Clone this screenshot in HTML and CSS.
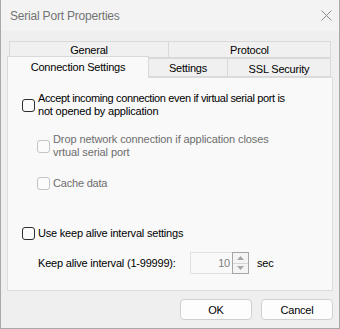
FILE: index.html
```html
<!DOCTYPE html>
<html>
<head>
<meta charset="utf-8">
<link rel="stylesheet" href="styles.css">
</head>
<body>
<div class="window">
  <div class="titlebar">
    <span class="title">Serial Port Properties</span>
    <svg class="close" width="11" height="11" viewBox="0 0 11 11"><path d="M0.5 0.5L10.5 10.5M10.5 0.5L0.5 10.5" stroke="#8c8c8c" stroke-width="1" fill="none"/></svg>
  </div>
  <div class="body">
    <div class="tabs">
      <div class="tabrow back">
        <div class="tab t-general">General</div>
        <div class="tab t-protocol">Protocol</div>
      </div>
      <div class="tabrow front">
        <div class="tab sel">Connection Settings</div>
        <div class="tab t-settings">Settings</div>
        <div class="tab t-ssl">SSL Security</div>
      </div>
    </div>
    <div class="panel">
      <div class="opt opt-accept">
        <span class="cb"></span>
        <span class="lbl"><span class="tight">Accept incoming connection even if virtual serial port is</span><br>not opened by application</span>
      </div>
      <div class="opt opt-drop disabled">
        <span class="cb"></span>
        <span class="lbl wide">Drop network connection if application closes<br>vrtual serial port</span>
      </div>
      <div class="opt opt-cache disabled">
        <span class="cb"></span>
        <span class="lbl">Cache data</span>
      </div>
      <div class="opt opt-keep">
        <span class="cb"></span>
        <span class="lbl">Use keep alive interval settings</span>
      </div>
      <div class="interval">
        <span class="ilabel">Keep alive interval (1-99999):</span>
        <div class="spinbox">
          <span class="value">10</span>
          <div class="spin">
            <div class="arrow up"><svg width="7" height="4" viewBox="0 0 7 4"><path d="M0 4L3.5 0L7 4Z" fill="#a6a6a6"/></svg></div>
            <div class="arrow down"><svg width="7" height="4" viewBox="0 0 7 4"><path d="M0 0L3.5 4L7 0Z" fill="#a6a6a6"/></svg></div>
          </div>
        </div>
        <span class="unit">sec</span>
      </div>
    </div>
    <div class="buttons">
      <div class="btn">OK</div>
      <div class="btn">Cancel</div>
    </div>
  </div>
</div>
</body>
</html>
```
FILE: styles.css
```css
* { box-sizing: border-box; }
html, body { margin: 0; padding: 0; background: #efefef; }
body {
  font-family: "Liberation Sans", Arial, sans-serif;
  font-size: 11px;
  letter-spacing: -0.2px;
  color: #000;
}
.window {
  width: 340px;
  height: 329px;
  border: 1px solid #a9a9a9;
  border-top: none;
  background: #efefef;
  display: flex;
  flex-direction: column;
}
.titlebar {
  height: 31px;
  flex: none;
  background: #f3f3f3;
  display: flex;
  align-items: center;
  justify-content: space-between;
  padding: 0 7px 0 9px;
}
.title {
  font-size: 12px;
  color: #737373;
  letter-spacing: -0.2px;
  margin-top: 1px;
}
.close { display: block; }
.body {
  padding: 10px 6px 0 6px;
  display: flex;
  flex-direction: column;
}
.tabs { height: 36px; display: flex; flex-direction: column; }
.tabrow { display: flex; }
.tab {
  border: 1px solid #d9d9d9;
  display: flex;
  align-items: center;
  justify-content: center;
  background: #f0f0f0;
}
.back { height: 17px; margin: 0 2px; }
.back .tab { height: 17px; }
.t-general { width: 160px; }
.t-protocol { width: 162px; border-left: none; }
.front { height: 21px; margin-top: -2px; margin-right: 2px; align-items: flex-start; }
.tab.sel {
  position: relative;
  z-index: 1;
  width: 142px;
  height: 22px;
  background: #f9f9f9;
  border-bottom: none;
  padding-bottom: 2px;
}
.t-settings { width: 79px; height: 19px; margin-top: 2px; border-left: none; padding-top: 1px; }
.t-ssl { width: 103px; height: 19px; margin-top: 2px; border-left: none; padding-top: 2px; }
.panel {
  height: 214px;
  background: #f9f9f9;
  border: 1px solid #dcdcdc;
  padding: 14px 0 0 14px;
  display: flex;
  flex-direction: column;
}
.opt { display: flex; align-items: center; line-height: 13px; }
.tight { letter-spacing: -0.36px; }
.wide { letter-spacing: -0.1px; }
.cb {
  width: 13px;
  height: 13px;
  flex: none;
  border: 1px solid #2e2e2e;
  border-radius: 3px;
  background: #fbfbfb;
  margin-right: 3px;
}
.disabled { color: #6d6d6d; }
.disabled .cb { border-color: #c4c4c4; }
.opt-drop { margin-top: 15px; padding-left: 15px; }
.opt-cache { margin-top: 18px; padding-left: 15px; }
.opt-cache .cb { margin-top: -1px; }
.opt-keep { margin-top: 37px; }
.interval {
  margin-top: 12px;
  height: 22px;
  display: flex;
  align-items: center;
  padding-left: 16px;
}
.ilabel { width: 152px; }
.spinbox {
  width: 59px;
  height: 22px;
  display: flex;
  border: 1px solid #e2e2e2;
  border-right: none;
  background: #f9f9f9;
}
.value {
  flex: 1;
  text-align: right;
  color: #7d7d7d;
  line-height: 20px;
  padding-right: 2px;
}
.spin {
  width: 17px;
  display: flex;
  flex-direction: column;
  border: 1px solid #a6a6a6;
  margin: -1px 0;
  height: 22px;
}
.arrow {
  flex: 1;
  display: flex;
  align-items: center;
  justify-content: center;
  background: #f4f4f4;
}
.arrow.up { border-bottom: 1px solid #d6d6d6; }
.arrow svg { display: block; }
.unit { margin-left: 8px; }
.buttons {
  display: flex;
  justify-content: flex-end;
  gap: 9px;
  margin-top: 8px;
}
.btn {
  width: 72px;
  height: 21px;
  border: 1px solid #d0d0d0;
  border-radius: 4px;
  background: #fdfdfd;
  display: flex;
  align-items: center;
  justify-content: center;
}
```
